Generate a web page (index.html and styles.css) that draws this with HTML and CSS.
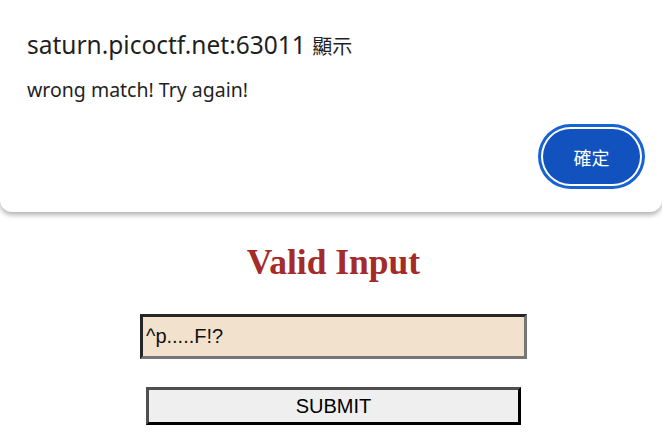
FILE: index.html
```html
<!DOCTYPE html>
<html lang="zh-Hant">
<head>
<meta charset="utf-8">
<title>Valid Input</title>
<link rel="stylesheet" href="styles.css">
</head>
<body>
<main class="page">
  <h1 class="title">Valid Input</h1>
  <form class="form" onsubmit="return false">
    <input class="field" type="text" value="^p.....F!?">
    <button class="submit" type="submit">SUBMIT</button>
  </form>
</main>
<div class="dialog" role="alertdialog">
  <div class="dialog-title">saturn.picoctf.net:63011 <span class="cjk">顯示</span></div>
  <div class="dialog-msg">wrong match! Try again!</div>
  <div class="dialog-actions">
    <button class="ok" type="button">確定</button>
  </div>
</div>
</body>
</html>
```

FILE: styles.css
```css
html, body {
  margin: 0;
  padding: 0;
  background: #ffffff;
}

.page {
  display: flex;
  flex-direction: column;
  align-items: center;
  padding: 242px 0 0 5px;
}

.title {
  margin: 0;
  font-family: "Liberation Serif", "Times New Roman", serif;
  font-weight: bold;
  font-size: 35.5px;
  line-height: 40px;
  color: #a52a2a;
}

.form {
  display: flex;
  flex-direction: column;
  align-items: center;
  gap: 28px;
  margin-top: 32px;
}

.field {
  box-sizing: border-box;
  width: 387px;
  height: 45px;
  margin: 0;
  padding: 0 3px;
  border: 3px solid;
  border-color: #262626 #767676 #767676 #262626;
  background: #f1e1cd;
  font-family: "Liberation Sans", Arial, sans-serif;
  font-size: 20px;
  color: #111111;
  outline: none;
}

.submit {
  box-sizing: border-box;
  width: 375px;
  height: 38px;
  margin: 0;
  padding: 0;
  border: 3px solid;
  border-color: #4f4f4f #000000 #000000 #4f4f4f;
  background: #efefef;
  font-family: "Liberation Sans", Arial, sans-serif;
  font-size: 20px;
  color: #000000;
}

.dialog {
  position: absolute;
  top: -12px;
  left: 0;
  right: 0;
  box-sizing: border-box;
  display: flex;
  flex-direction: column;
  padding: 42px 22px 28px 27px;
  background: #ffffff;
  border-radius: 12px;
  box-shadow: 0 3px 5px rgba(0, 0, 0, 0.3);
  font-family: "Noto Sans", "Open Sans", "Noto Sans CJK TC", sans-serif;
  color: #1f1f1f;
}

.dialog-title {
  font-size: 24.5px;
  line-height: 30px;
}

.cjk {
  font-family: "Noto Sans CJK TC", sans-serif;
  font-size: 20px;
}

.dialog-msg {
  margin-top: 16px;
  font-size: 19.5px;
  line-height: 26px;
}

.dialog-actions {
  display: flex;
  justify-content: flex-end;
  margin-top: 26px;
}

.ok {
  width: 97px;
  height: 55px;
  margin: 0;
  padding: 0;
  border: none;
  border-radius: 28px;
  background: #1152be;
  color: #ffffff;
  font-family: "Noto Sans CJK TC", "Noto Sans", sans-serif;
  font-size: 18px;
  box-shadow: 0 0 0 2px #ffffff, 0 0 0 5px #1763d3;
}
```
